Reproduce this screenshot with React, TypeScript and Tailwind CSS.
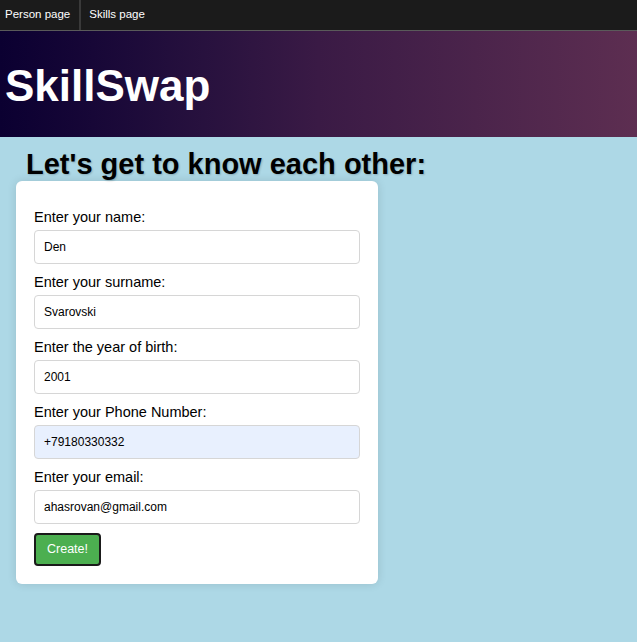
import { useState } from 'react';

const fields = [
  { id: 'name', label: 'Enter your name:', value: 'Den' },
  { id: 'surname', label: 'Enter your surname:', value: 'Svarovski' },
  { id: 'year', label: 'Enter the year of birth:', value: '2001' },
  { id: 'phone', label: 'Enter your Phone Number:', value: '+79180330332', autofill: true },
  { id: 'email', label: 'Enter your email:', value: 'ahasrovan@gmail.com' },
];

export default function App() {
  const [values, setValues] = useState<Record<string, string>>(
    Object.fromEntries(fields.map((f) => [f.id, f.value]))
  );

  return (
    <div className="min-h-[642px] bg-[#add8e6] font-['Liberation_Sans',Arial,sans-serif] text-black">
      <nav className="flex h-[31px] items-stretch bg-[#1b1b1b] border-b border-[#5a5a5a] text-[11.5px] text-white">
        <a className="flex items-center pl-[5px] pr-[9px] border-r-2 border-[#3a3a3a]">Person page</a>
        <a className="flex items-center pl-[8px] pr-[8px]">Skills page</a>
      </nav>

      <header className="flex h-[106px] items-center bg-linear-to-r from-[#0b0031] via-[#3a1a45] to-[#5d2e51] px-[5px]">
        <h1 className="text-[44px] font-bold leading-none text-white pt-[4px]">SkillSwap</h1>
      </header>

      <h2 className="ml-[26px] mt-[11px] mb-[1px] text-[29px] font-bold leading-[32px] [text-shadow:1px_1px_2px_rgba(0,0,0,0.2)]">
        Let's get to know each other:
      </h2>

      <div className="ml-[16px] w-[362px] rounded-[6px] bg-white px-[18px] pt-[18px] pb-[18px] shadow-[0_0_10px_rgba(0,0,0,0.12)]">
        {fields.map((f) => (
          <div key={f.id}>
            <label htmlFor={f.id} className="mt-[9px] mb-[4px] block text-[14.5px] leading-[18px]">
              {f.label}
            </label>
            <input
              id={f.id}
              value={values[f.id]}
              onChange={(e) => setValues({ ...values, [f.id]: e.target.value })}
              className={`block h-[34px] w-full rounded-[4px] border border-[#d6d6d6] px-[9px] text-[12px] outline-none ${
                f.autofill ? 'bg-[#e8f0fe]' : 'bg-white'
              }`}
            />
          </div>
        ))}
        <button className="mt-[9px] h-[33px] rounded-[4px] border-2 border-[#1a1a1a] bg-[#4caf50] px-[11px] text-[12.5px] text-white">
          Create!
        </button>
      </div>
    </div>
  );
}
